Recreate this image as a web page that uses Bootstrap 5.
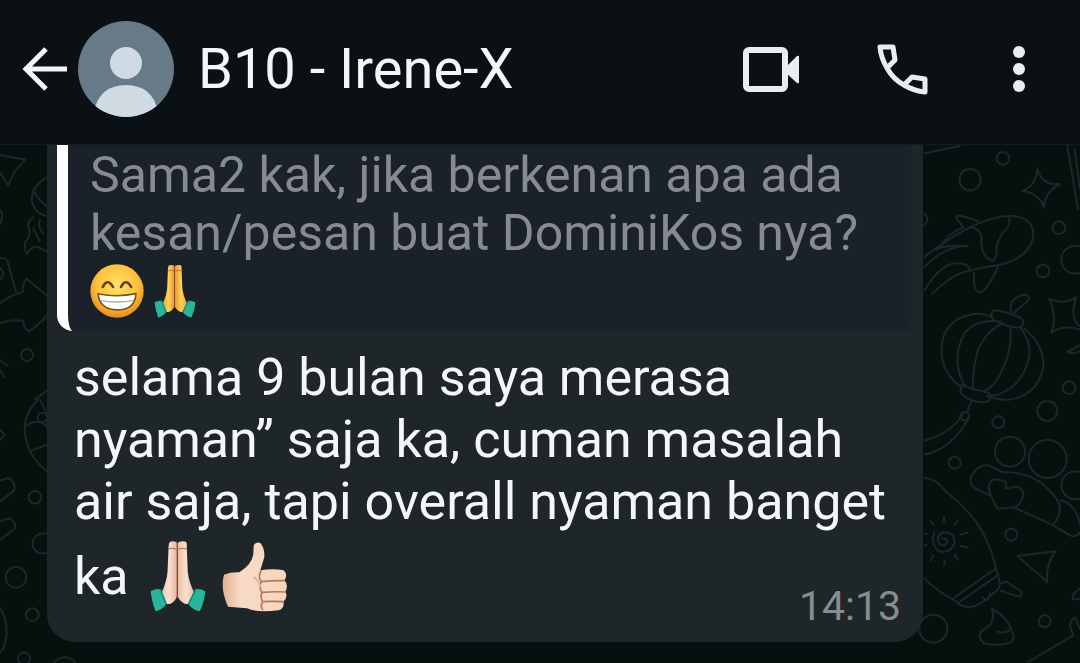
<!DOCTYPE html>
<html lang="id">
<head>
<meta charset="utf-8">
<meta name="viewport" content="width=device-width, initial-scale=1">
<title>B10 - Irene-X</title>
<link href="https://cdn.jsdelivr.net/npm/bootstrap@5.3.0/dist/css/bootstrap.min.css" rel="stylesheet">
<style>
  body { background: #07100f; color: #f3f7f9; font-family: Roboto, "Liberation Sans", sans-serif; }
  .topbar { background: #0b1014; height: 145px; padding: 0 43px 6px 22px; border-bottom: 1px solid #151c1f; }
  .icon-btn { background: none; border: 0; padding: 0; color: #e8edef; line-height: 0; }
  .contact { font-size: 56px; line-height: 64px; margin-left: 24px; }
  .avatar { margin-left: 10px; }
  .actions { gap: 78px; }
  .menu-btn { margin-left: -6px; }
  .doodle { top: 0; stroke: #1d2728; stroke-width: 6; fill: none; stroke-linejoin: round; stroke-linecap: round; }
  .bubble { background: #1f2629; margin: 0 157px 0 47px; padding: 0 12px 30px 10px; border-radius: 0 0 28px 28px; }
  .quote { background: #1a2129; color: #868b8f; border-left: 11px solid #fff; border-radius: 0 0 8px 16px; padding: 1px 12px 11px 22px; font-size: 50px; line-height: 58px; }
  .message { font-size: 52px; line-height: 62px; padding: 16px 0 0 17px; }
  .stamp { color: #868c8f; font-size: 41px; line-height: 40px; bottom: 16px; right: 22px; }
  .emoji-sm { vertical-align: -10px; }
  .emoji-lg { vertical-align: -18px; margin-top: 7px; }
</style>
</head>
<body class="d-flex flex-column min-vh-100">
<svg width="0" height="0" class="position-absolute" aria-hidden="true">
  <defs>
    <radialGradient id="face" cx=".5" cy=".4" r=".6"><stop offset="0" stop-color="#ffe36a"/><stop offset=".65" stop-color="#fbc23c"/><stop offset="1" stop-color="#e58a1f"/></radialGradient>
    <linearGradient id="gold"><stop offset="0" stop-color="#e9962a"/><stop offset=".5" stop-color="#ffd35a"/><stop offset="1" stop-color="#e9962a"/></linearGradient>
    <linearGradient id="pale"><stop offset="0" stop-color="#e9bfa6"/><stop offset=".5" stop-color="#f9e0d0"/><stop offset="1" stop-color="#e3b59c"/></linearGradient>
    <linearGradient id="thumb" x1="0" y1="0" x2="1" y2="0"><stop offset="0" stop-color="#e3b295"/><stop offset=".3" stop-color="#f8dcc7"/><stop offset="1" stop-color="#f6d5bd"/></linearGradient>
    <g id="hands">
      <path d="M44 5q15-4 21 4v154q-1 12-13 22-12 10-24 2l-12-24q18-40 20-70l3-72q0-13 5-16z"/>
      <path d="M90 5q-15-4-25 4v154q1 12 15 22 12 10 26 2l12-24q-20-40-22-70l-3-72q1-13-3-16z"/>
      <path d="M65 8v162" fill="none" stroke="#8a4a2c" stroke-width="4"/>
      <path d="M38 28q10-7 24 0M68 28q12-7 25 0" fill="none" stroke="#a86443" stroke-width="3"/>
      <path d="M-14 152q14-8 28-6l18 45q-14 18-32 21-12-34-14-60z" fill="#27b59c"/>
      <path d="M148 152q-14-8-28-6l-22 45q14 18 34 21 14-30 16-60z" fill="#27b59c"/>
      <path d="M14 146l18 45M120 146l-22 45" stroke="#128873" stroke-width="5" fill="none"/>
    </g>
  </defs>
</svg>

<header class="topbar d-flex align-items-center flex-shrink-0">
  <button class="icon-btn" type="button" aria-label="Kembali">
    <svg width="46" height="46" viewBox="0 0 46 46" fill="none" stroke="#f3f7f9" stroke-width="5"><path d="M45 23H5M24 3L4 23l20 20"/></svg>
  </button>
  <svg class="avatar flex-shrink-0" width="96" height="96" viewBox="0 0 96 96" role="img" aria-label="Foto profil">
    <clipPath id="disc"><circle cx="48" cy="48" r="48"/></clipPath>
    <g clip-path="url(#disc)"><rect width="96" height="96" fill="#667b87"/><circle cx="48" cy="42" r="16" fill="#cfdae2"/><path d="M16 90q6-26 32-26t32 26q-14 12-32 12T16 90z" fill="#cfdae2"/></g>
  </svg>
  <h1 class="contact fw-normal mb-0 text-nowrap">B10 - Irene-X</h1>
  <div class="actions d-flex align-items-center ms-auto">
    <button class="icon-btn" type="button" aria-label="Panggilan video">
      <svg width="56" height="46" viewBox="0 0 56 46"><rect x="3" y="4" width="39" height="39" rx="3" fill="none" stroke="currentColor" stroke-width="6"/><path d="M43 21L54 10q2-1 2 1v25q0 2-2 1L43 27z" fill="currentColor"/></svg>
    </button>
    <button class="icon-btn" type="button" aria-label="Panggilan suara">
      <svg width="52" height="52" viewBox="0 0 52 52" fill="none" stroke="currentColor" stroke-width="5" stroke-linejoin="round"><path d="M3 4h13l2 13-8 8Q4 15 3 4zM48 49V36l-13-2-8 8q10 6 21 7zM10 25q6 11 17 17"/></svg>
    </button>
    <button class="icon-btn menu-btn" type="button" aria-label="Opsi lainnya">
      <svg width="36" height="46" viewBox="0 0 36 46" fill="currentColor"><circle cx="18" cy="6" r="6"/><circle cx="18" cy="23" r="6"/><circle cx="18" cy="40" r="6"/></svg>
    </button>
  </div>
</header>

<main class="position-relative flex-grow-1 overflow-hidden">
  <svg class="doodle position-absolute start-0" width="90" height="518" viewBox="0 15 270 1554" aria-hidden="true">
    <path d="M0 45L76 59 46 92 24 135 0 98M0 210q14 14 0 40M138 112q-44 30-43 70 8 40 45 46M100 150q15 30 40 48M100 232q-22 10-12 40 2 20-12 34-4 20 4 36 14-24 34-22 14 10 26 14M120 240q-8 20 10 40M100 265q10 20 20 40"/>
    <path d="M0 355q18-4 24 14l24 86M0 385q12 8 8 20-2 10-8 12M0 490q32-26 68-34 0-30 12-40l60 50M0 550q40-14 70-6 0 20 16 30 30-16 54-48M0 662l22 14M0 690l12 20M105 778l35-26"/>
    <circle cx="81" cy="645" r="18"/>
    <path d="M112 780q-40 40-38 92 8 80 66 120M120 780q30 50 20 80M76 860q30-26 60-6M96 932l44-18M0 868l14 18-14 12M0 1022l24-8q24 10 18 38L0 1084M0 1144l28-10q22 14 16 32L0 1200M140 1180q-30-4-40 20-8 30 20 40h22M0 1404q26 40 18 90-4 30-18 44"/>
    <circle cx="127" cy="832" r="14"/><circle cx="105" cy="1072" r="19"/><circle cx="48" cy="1312" r="31"/><circle cx="97" cy="1424" r="19"/><circle cx="72" cy="1555" r="18"/><circle cx="194" cy="1590" r="38"/>
  </svg>
  <svg class="doodle position-absolute end-0" width="170" height="518" viewBox="0 15 510 1554" aria-hidden="true">
    <circle cx="279" cy="55" r="19"/><circle cx="180" cy="119" r="32"/><circle cx="447" cy="263" r="19"/><circle cx="399" cy="393" r="19"/><circle cx="496" cy="359" r="42"/>
    <path d="M44 40L150 18M382 86q12 50 68 46-46 24-48 70-14-40-64-50 40-14 44-66M472 18l32 190M494 28l16 120M44 220q16 18 0 34"/>
    <path d="M44 350q80-60 140-90 70-34 120-32 68 4 66 60-14 70-108 88-60 8-104 22-40 12-92 64M90 320q30-44 70-58l-22-30q0-14 66 12M182 262q34 6 32 34-2 54 32 66 14 0 14-42 8-34 30-54 14-16 6-36M44 380q60-62 130-62-70-4-94 10M44 450q52-84 100-80 34 0 36 26M192 398q-4 54 18 60 26-10 56-84"/>
    <path d="M302 516q-4-44 40-52 26 2 8 22-20 14-42 38M418 476q40 20 80-4-20 60 10 86M418 476q24 60 6 102 36-24 84-10M510 616l-38 20q20 8 38-2"/>
    <path d="M250 512q-14 14 4 30 50 24 80 20 12-16-4-30-60-24-80-20zM250 532q-30-14-60-10-94 16-96 110 2 70 62 110M270 544q-70-8-104 32-48 84 0 164M280 550q-50 20-76 80-18 60-14 120M300 560q10 60-24 132-20 48-56 62M330 560q44 60 20 116-20 60-80 86l-34 6M344 566q60 50 56 116-20 90-110 98-32-2-60-12M156 734q-8 20 0 30 40 30 80 20 10-14 0-26-50-10-80-24zM184 784l-12 30M160 818q-30 60-116 84M174 838q-50 90-130 106"/>
    <circle cx="164" cy="828" r="13"/><circle cx="477" cy="743" r="19"/><circle cx="412" cy="813" r="30"/><circle cx="265" cy="847" r="18"/><circle cx="134" cy="968" r="18"/><circle cx="300" cy="935" r="45"/><circle cx="413" cy="957" r="57"/><circle cx="496" cy="1036" r="42"/>
    <path d="M240 1066l-42-20q-26-16-12-42 20-32 50-28l40 20q80 0 124 38 60 50 48 86-6 24-22 34L316 1104M452 1080q50 16 58 74M426 1154l54 32q20 8 30-10M262 1106q-26-48-26-66 6-34 52-14v20q50-16 52 18-6 30-26 38z"/>
    <path d="M44 1014q30 0 60 36 80 70 104 110 36 60 50 126l10 36v20q-50 54-90 60-30-2-42-20-50-24-92-66M134 1372l126-88M148 1386l118-82M270 1332l18-8 46 30q2 18-8 16l-54-18M218 1372q10 16 20 0l2-12"/>
    <path d="M97 1196q14-4 14 12-6 14-22 4-14-24 10-36 38 0 34 36-16 32-50 20-24-30-10-54M102 1132v14M144 1142l-10 12M172 1178l-20 6M172 1222l-20-4M144 1258l-10-14M103 1262v14M62 1262l8-16M62 1144l10 10M44 1182h6M44 1216h6"/>
    <circle cx="304" cy="1184" r="18"/><circle cx="404" cy="1444" r="18"/><circle cx="70" cy="1466" r="42"/>
    <path d="M322 1248l114-14q-30 40-24 92zM246 1406q50 28 58 66 16 28-8 38-40 8-74 0-30-30 10-48 24-16 14-56M300 1470q-16 12-40 4M510 1346q-24 14-22 32h22M510 1468l-14-34q-14 0-16 24l10 28-136 80"/>
  </svg>

  <article class="bubble position-relative">
    <blockquote class="quote mb-0">Sama2 kak, jika berkenan apa ada kesan/pesan buat DominiKos nya?<br><svg class="emoji-sm" width="54" height="54" viewBox="0 0 160 160" role="img" aria-label="Wajah menyeringai">
        <circle cx="80" cy="80" r="79" fill="url(#face)"/>
        <path d="M24 88q54 12 112 0-2 48-56 48-52-2-56-48z" fill="#fff" stroke="#805316" stroke-width="5"/>
        <path d="M30 108q50 9 100 0" stroke="#b7ad94" stroke-width="4" fill="none"/>
        <path d="M38 68q14-28 30 0M92 68q14-28 30 0" stroke="#713f10" stroke-width="8" fill="none" stroke-linecap="round"/>
      </svg><svg class="emoji-sm ms-2" width="46" height="54" viewBox="-16 0 166 214" role="img" aria-label="Tangan terkatup" fill="url(#gold)"><use href="#hands"/></svg></blockquote>
    <div class="message">selama 9 bulan saya merasa nyaman” saja ka, cuman masalah air saja, tapi overall nyaman banget
      <span class="text-nowrap">ka
        <svg class="emoji-lg ms-2" width="56" height="72" viewBox="-16 0 166 214" role="img" aria-label="Tangan terkatup" fill="url(#pale)"><use href="#hands"/></svg>
        <svg class="emoji-lg ms-1" width="66" height="70" viewBox="0 0 198 210" role="img" aria-label="Jempol">
          <path d="M6 98q20-8 46-7 38-24 42-54l1-26q6-14 20-8 14 16 12 42l-12 40q40-6 70 0 14 14 2 30 14 14 3 34 9 16-6 30 5 20-15 26-64 8-94-6L18 194Q-6 140 6 98z" fill="url(#thumb)"/>
          <path d="M117 86q-10 20 1 33-9 18 2 32-6 16 2 28-8 14 0 24M118 119q38-4 69-3M120 151q40-3 70-1M122 179q36-2 62 0" fill="none" stroke="#b9775a" stroke-width="5" stroke-linecap="round"/>
          <path d="M95 105q18 14 22 34" fill="none" stroke="#e0b498" stroke-width="6"/>
        </svg>
      </span>
    </div>
    <time class="stamp position-absolute" datetime="14:13">14:13</time>
  </article>
</main>
<script src="https://cdn.jsdelivr.net/npm/bootstrap@5.3.0/dist/js/bootstrap.bundle.min.js"></script>
</body>
</html>
